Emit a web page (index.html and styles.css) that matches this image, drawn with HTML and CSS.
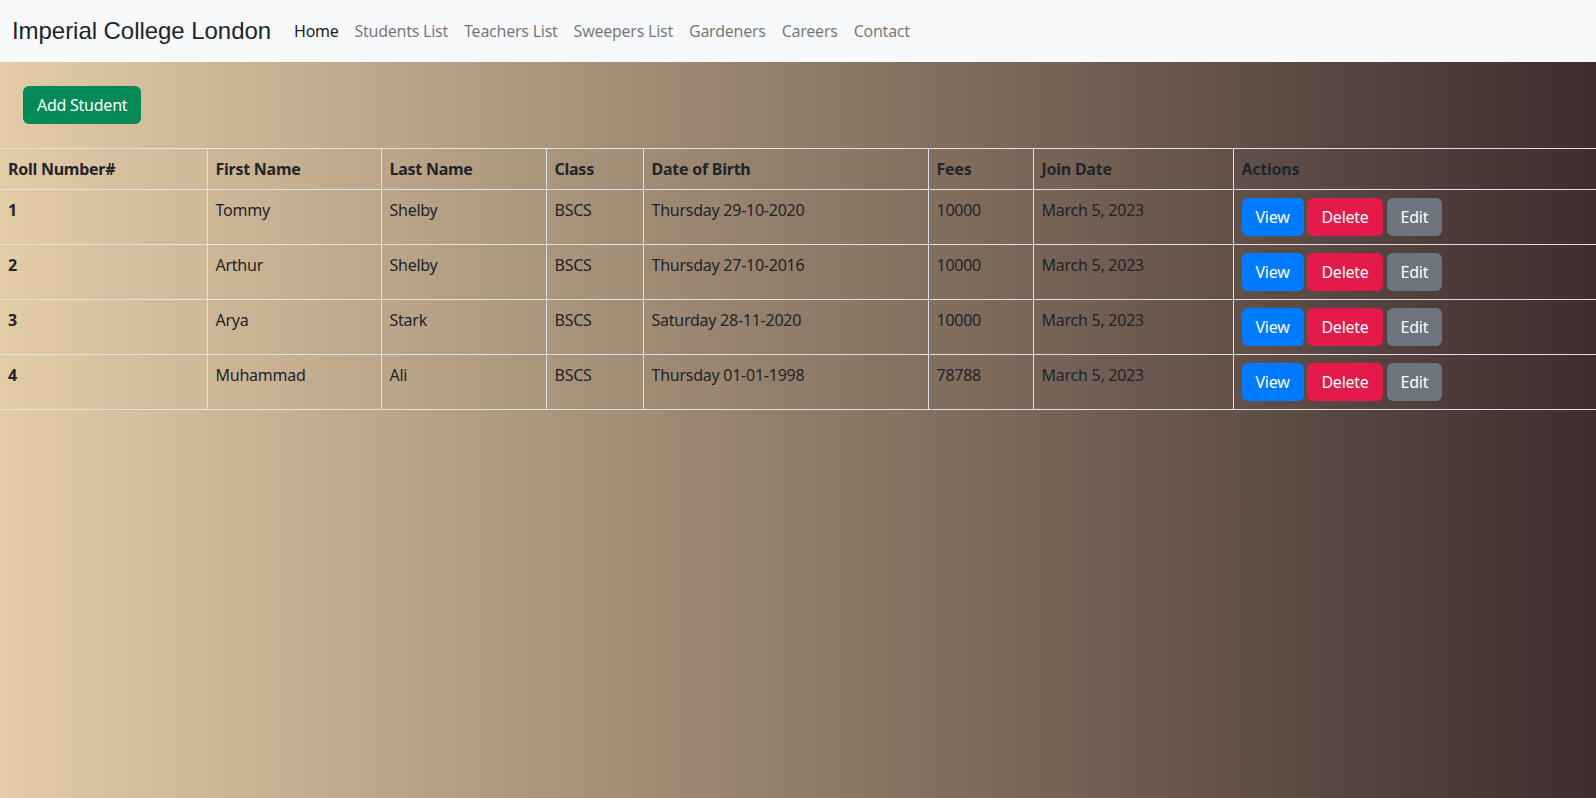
FILE: index.html
```html
<!DOCTYPE html>
<html lang="en">
<head>
<meta charset="utf-8">
<title>Imperial College London</title>
<link rel="stylesheet" href="styles.css">
</head>
<body>
<nav class="navbar">
  <a class="brand" href="#">Imperial College London</a>
  <ul class="nav-links">
    <li><a class="nav-link active" href="#">Home</a></li>
    <li><a class="nav-link" href="#">Students List</a></li>
    <li><a class="nav-link" href="#">Teachers List</a></li>
    <li><a class="nav-link" href="#">Sweepers List</a></li>
    <li><a class="nav-link" href="#">Gardeners</a></li>
    <li><a class="nav-link" href="#">Careers</a></li>
    <li><a class="nav-link" href="#">Contact</a></li>
  </ul>
</nav>
<main>
  <div class="toolbar">
    <button class="btn btn-success">Add Student</button>
  </div>
  <table class="students">
    <colgroup>
      <col class="c-roll">
      <col class="c-first">
      <col class="c-last">
      <col class="c-class">
      <col class="c-dob">
      <col class="c-fees">
      <col class="c-join">
      <col class="c-actions">
    </colgroup>
    <thead>
      <tr>
        <th>Roll Number#</th>
        <th>First Name</th>
        <th>Last Name</th>
        <th>Class</th>
        <th>Date of Birth</th>
        <th>Fees</th>
        <th>Join Date</th>
        <th>Actions</th>
      </tr>
    </thead>
    <tbody>
      <tr>
        <th>1</th><td>Tommy</td><td>Shelby</td><td>BSCS</td><td>Thursday 29-10-2020</td><td>10000</td><td>March 5, 2023</td>
        <td><button class="btn btn-primary">View</button> <button class="btn btn-danger">Delete</button> <button class="btn btn-secondary">Edit</button></td>
      </tr>
      <tr>
        <th>2</th><td>Arthur</td><td>Shelby</td><td>BSCS</td><td>Thursday 27-10-2016</td><td>10000</td><td>March 5, 2023</td>
        <td><button class="btn btn-primary">View</button> <button class="btn btn-danger">Delete</button> <button class="btn btn-secondary">Edit</button></td>
      </tr>
      <tr>
        <th>3</th><td>Arya</td><td>Stark</td><td>BSCS</td><td>Saturday 28-11-2020</td><td>10000</td><td>March 5, 2023</td>
        <td><button class="btn btn-primary">View</button> <button class="btn btn-danger">Delete</button> <button class="btn btn-secondary">Edit</button></td>
      </tr>
      <tr>
        <th>4</th><td>Muhammad</td><td>Ali</td><td>BSCS</td><td>Thursday 01-01-1998</td><td>78788</td><td>March 5, 2023</td>
        <td><button class="btn btn-primary">View</button> <button class="btn btn-danger">Delete</button> <button class="btn btn-secondary">Edit</button></td>
      </tr>
    </tbody>
  </table>
</main>
</body>
</html>
```
FILE: styles.css
```css
html, body {
  margin: 0;
  padding: 0;
}
body {
  min-height: 100vh;
  font-family: "Noto Sans", "DejaVu Sans", sans-serif;
  font-size: 16px;
  line-height: 24px;
  color: #212529;
  letter-spacing: -0.25px;
  background: linear-gradient(to right, #e3cca6, #3d2d2d);
  background-attachment: fixed;
}
.navbar {
  height: 62px;
  box-sizing: border-box;
  background: #f8f9fa;
  display: flex;
  align-items: center;
  padding: 0 12px;
}
.brand {
  font-family: "Liberation Sans", Arial, sans-serif;
  font-size: 24px;
  letter-spacing: -0.05px;
  color: #212529;
  text-decoration: none;
  margin-right: 15px;
}
.nav-links {
  list-style: none;
  display: flex;
  margin: 0;
  padding: 0;
}
.nav-link {
  display: block;
  padding: 8px 8px;
  color: rgba(0, 0, 0, 0.55);
  text-decoration: none;
}
.nav-link.active {
  color: rgba(0, 0, 0, 0.9);
}
.toolbar {
  padding: 24px 23px 24px;
}
.btn {
  display: inline-block;
  font-family: inherit;
  font-size: 16px;
  line-height: 24px;
  letter-spacing: inherit;
  padding: 6px 13px;
  border: 1px solid transparent;
  border-radius: 6px;
  color: #fff;
  vertical-align: middle;
  cursor: pointer;
}
.btn-success { background: #058a57; }
.btn-primary { background: #007bff; }
.btn-danger { background: #e31a4a; }
.btn-secondary { background: #6c757d; }
.students {
  width: 100%;
  table-layout: fixed;
  border-collapse: collapse;
}
.c-roll { width: 207px; }
.c-first { width: 174px; }
.c-last { width: 165px; }
.c-class { width: 97px; }
.c-dob { width: 285px; }
.c-fees { width: 105px; }
.c-join { width: 200px; }
.students th,
.students td {
  border: 1px solid #dee2e6;
  padding: 8px;
  text-align: left;
  vertical-align: top;
}
.students th:first-child,
.students td:first-child { border-left: 0; }
.students th:last-child,
.students td:last-child { border-right: 0; }
.students th { font-weight: 700; }
.students td { font-weight: 400; }
```
